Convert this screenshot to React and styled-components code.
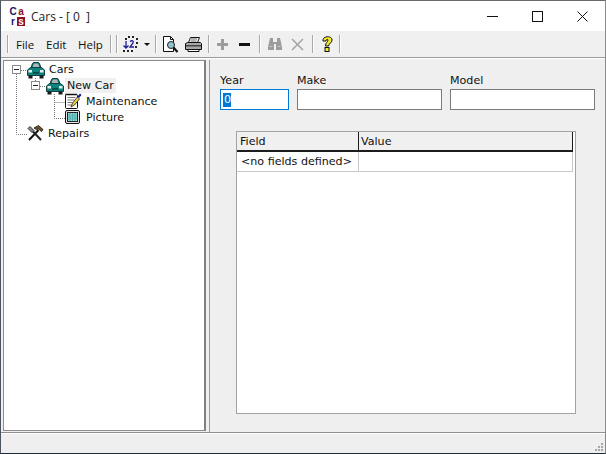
import React from 'react'
import styled, { createGlobalStyle } from 'styled-components'

const GlobalStyle = createGlobalStyle`
  html, body { margin: 0; padding: 0; background: #f0f0f0; }
  #root { width: 606px; height: 454px; overflow: hidden; }
`

const Win = styled.div`
  width: 606px;
  height: 454px;
  box-sizing: border-box;
  display: flex;
  flex-direction: column;
  background: #efefef;
  border-top: 1px solid #6a6a6a;
  border-left: 1px solid #4a5560;
  border-right: 1px solid #8a8a8a;
  border-bottom: 1px solid #1e2c3a;
  font-family: 'DejaVu Sans', sans-serif;
  font-size: 11px;
  color: #111;
`
const TitleBar = styled.div`
  height: 30px;
  flex: none;
  background: #fff;
  display: flex;
  align-items: center;
  padding-left: 8px;
`
const LogoGrid = styled.div`
  display: grid;
  grid-template-columns: 8px 8px;
  grid-template-rows: 9px 9px;
  gap: 1px 0;
  flex: none;
`
const LogoLetter = styled.span`
  display: flex;
  align-items: center;
  justify-content: center;
  overflow: hidden;
  font-family: 'Liberation Sans', sans-serif;
  font-weight: 700;
  font-size: 10px;
  line-height: 9px;
  color: ${p => p.$color};
  background: ${p => p.$bg || 'transparent'};
`
const TitleText = styled.span`
  font-family: 'Open Sans', sans-serif;
  font-size: 12px;
  color: #222;
  margin-left: 6px;
  white-space: pre;
  flex: 1;
`
const CaptionBtn = styled.div`
  width: 45px;
  height: 30px;
  display: flex;
  align-items: center;
  justify-content: center;
`
const Toolbar = styled.div`
  height: 26px;
  flex: none;
  display: flex;
  align-items: center;
  background: #f0f0f0;
  border-bottom: 1px solid #9a9a9a;
  box-shadow: 0 1px 0 #fff;
`
const Grip = styled.div`
  width: 2px;
  height: 18px;
  flex: none;
  margin-left: ${p => p.$left}px;
  border-left: 1px solid #a8a8a8;
  border-right: 1px solid #fff;
  box-sizing: border-box;
`
const MenuItem = styled.span`
  font-family: 'Open Sans', sans-serif;
  font-size: 11.5px;
  width: ${p => p.$w}px;
  flex: none;
  color: #111;
`
const MenuGroup = styled.div`
  display: flex;
  margin-left: 7px;
`
const Tool = styled.div`
  width: 17px;
  height: 17px;
  flex: none;
  margin-left: ${p => p.$left}px;
  display: flex;
  align-items: center;
  justify-content: center;
`
const Main = styled.div`
  flex: 1;
  min-height: 0;
  display: flex;
  padding: 2px 1px 0 2px;
  border-bottom: 1px solid #8f8f8f;
`
const TreePane = styled.div`
  position: relative;
  width: 203px;
  flex: none;
  box-sizing: border-box;
  margin-bottom: 1px;
  background: #fff;
  border: 1px solid #8c8c8c;
  border-right: 2px solid #808080;
`
const TreeLines = styled.svg`
  position: absolute;
  left: 0;
  top: 0;
`
const TreeRow = styled.div`
  position: relative;
  height: 16px;
  display: flex;
  align-items: center;
  padding-left: ${p => p.$indent}px;
`
const Expander = styled.div`
  width: 7px;
  height: 7px;
  border: 1px solid #8a8a8a;
  background: #fff;
  margin-right: 6px;
  display: flex;
  align-items: center;
  justify-content: center;
  flex: none;
  &::before {
    content: '';
    width: 5px;
    height: 1px;
    background: #222;
  }
`
const TreeLabel = styled.span`
  margin-left: ${p => p.$gap}px;
  padding: 1px 2px;
  background: ${p => (p.$selected ? '#f0f0f0' : 'transparent')};
  font-size: 11.1px;
  white-space: nowrap;
`
const Splitter = styled.div`
  width: 3px;
  flex: none;
  border-right: 1px solid #9a9a9a;
`
const Detail = styled.div`
  flex: 1;
  min-width: 0;
  display: flex;
  flex-direction: column;
  padding: 13px 8px 18px 10px;
`
const Fields = styled.div`
  display: flex;
  gap: 8px;
`
const Field = styled.label`
  display: flex;
  flex-direction: column;
  width: ${p => p.$w}px;
  font-size: 11.1px;
  gap: 1px;
  line-height: 15px;
`
const InputBox = styled.div`
  height: 21px;
  box-sizing: border-box;
  background: #fff;
  border: 1px solid ${p => (p.$focus ? '#0078d7' : '#7a7a7a')};
  padding: 2px;
  display: flex;
  align-items: center;
`
const Selected = styled.span`
  background: #0078d7;
  color: #fff;
  padding: 0 0 0 1px;
  line-height: 14px;
  width: 7px;
  font-size: 11.1px;
`
const Grid = styled.div`
  flex: 1;
  margin: 21px 20px 0 16px;
  background: #fff;
  border: 1px solid #a3a3a3;
  padding-right: 2px;
`
const GridRow = styled.div`
  display: grid;
  grid-template-columns: 121px 1fr;
  height: ${p => (p.$head ? 18 : 19)}px;
  box-sizing: content-box;
  background: ${p => (p.$head ? '#f0f0f0' : '#fff')};
  border-bottom: ${p => (p.$head ? '2px solid #1c1c1c' : '1px solid #c8c8c8')};
  border-right: 1px solid ${p => (p.$head ? '#1c1c1c' : '#c8c8c8')};
`
const GridCell = styled.div`
  font-size: 11.1px;
  display: flex;
  align-items: center;
  padding-left: ${p => p.$pad}px;
  white-space: nowrap;
  border-left: ${p => (p.$first ? 'none' : `1px solid ${p.$head ? '#1c1c1c' : '#c8c8c8'}`)};
`
const StatusBar = styled.div`
  height: 20px;
  flex: none;
  display: flex;
  justify-content: flex-end;
  align-items: flex-end;
  box-shadow: inset 0 1px 0 #fff;
`
const Arrow = styled.div`
  width: 0;
  height: 0;
  flex: none;
  margin-left: ${p => p.$left}px;
  border-left: 3px solid transparent;
  border-right: 3px solid transparent;
  border-top: 3px solid #111;
`

const Logo = () => (
  <LogoGrid>
    <LogoLetter $color="#17176e">C</LogoLetter>
    <LogoLetter $color="#8e1020">a</LogoLetter>
    <LogoLetter $color="#17176e">r</LogoLetter>
    <LogoLetter $color="#fff" $bg="#8e1020">s</LogoLetter>
  </LogoGrid>
)

const CarIcon = () => (
  <svg width="18" height="17" viewBox="0 0 18 17" style={{ flex: 'none', marginTop: 2 }}>
    <path d="M4 6l1.500-4.500Q6 0.500 7 0.500h4q1 0 1.500 1L14 6z" fill="#0e7a76" stroke="#12393a" />
    <path d="M5.500 6l1-3.500q0.300-1 1-1h3q0.700 0 1 1l1 3.500z" fill="#aeb8b8" />
    <path d="M0.500 8l3-2.500h11l3 2.500v5.500H0.500z" fill="#0f827d" stroke="#0a4544" />
    <rect x="1.500" y="8" width="3.500" height="2.500" fill="#e6efe6" />
    <rect x="13" y="8" width="3.500" height="2.500" fill="#e6efe6" />
    <rect x="6" y="10" width="6" height="2" fill="#06504e" />
    <rect x="1.500" y="13.500" width="4" height="3" fill="#1a1a1a" />
    <rect x="12.500" y="13.500" width="4" height="3" fill="#1a1a1a" />
  </svg>
)

const NoteIcon = () => (
  <svg width="17" height="16" viewBox="0 0 17 16" style={{ flex: 'none' }}>
    <rect x="0.500" y="1.500" width="12" height="14" rx="1" fill="#fff" stroke="#111" />
    <path d="M1 0.500v2M3 0.500v2M5 0.500v2M7 0.500v2M9 0.500v2M11 0.500v2" stroke="#111" />
    <path d="M2.500 4.500h8M2.500 7h7M2.500 9.500h5M2.500 12h4" stroke="#777" />
    <path d="M6 14l1.500-4 5-6 2 2-5 6z" fill="#e8d040" stroke="#222" strokeWidth="0.800" />
    <path d="M12.500 3.500l2.500-3 1.500 1.500-2.500 3z" fill="#1b1a8a" />
  </svg>
)

const PictureIcon = () => (
  <svg width="17" height="15" viewBox="0 0 17 15" style={{ flex: 'none' }}>
    <rect x="0.500" y="0.500" width="14" height="13" rx="1.500" fill="#e4e4e4" stroke="#111" />
    <rect x="2.500" y="2.500" width="10" height="9" fill="#8fdada" stroke="#222" />
    <path d="M3 5h9M3 7h9M3 9h9M5 3v8M7.500 3v8M10 3v8" stroke="#3a9a9a" strokeWidth="0.600" />
  </svg>
)

const ToolsIcon = () => (
  <svg width="17" height="16" viewBox="0 0 17 16" style={{ flex: 'none' }}>
    <path d="M2 15l9.500-10" stroke="#111" strokeWidth="2" />
    <path d="M14 15L6 6.500" stroke="#222" strokeWidth="2" />
    <path d="M7 3l4.500-2.500 4.500 4-1.500 2-3-2.500-2 0.500z" fill="#6e4e22" stroke="#111" strokeWidth="0.800" />
    <path d="M1 3.500l2-2 4 4-2 2z" fill="#8a8a8a" stroke="#111" strokeWidth="0.800" />
  </svg>
)

const FormIcon = () => (
  <svg width="17" height="18" viewBox="0 0 17 18">
    <g fill="#222">
      <rect x="6" y="1" width="2" height="2" />
      <rect x="10" y="1" width="2" height="2" />
      <rect x="14" y="3" width="2" height="2" />
      <rect x="14" y="7" width="2" height="2" />
      <rect x="13" y="11" width="2" height="2" />
      <rect x="1" y="15" width="2" height="2" />
      <rect x="5" y="15" width="2" height="2" />
      <rect x="9" y="15" width="2" height="2" />
      <rect x="3" y="3" width="2" height="2" />
    </g>
    <path d="M4 6v7M1.500 10.500L4 13l2.500-2.500" fill="none" stroke="#1c1c9c" strokeWidth="1.300" />
    <path d="M8 6.500c2-1.500 4-0.500 3 1.500l-3 4h4" fill="none" stroke="#1c1c9c" strokeWidth="1.300" />
  </svg>
)

const PreviewIcon = () => (
  <svg width="17" height="17" viewBox="0 0 17 17">
    <path d="M1.500 0.500h7l3 3v12h-10z" fill="#fff" stroke="#111" />
    <path d="M8.500 0.500v3h3" fill="none" stroke="#111" />
    <circle cx="9" cy="9" r="3.500" fill="#8fc4cf" stroke="#222" />
    <path d="M11.500 11.500l4 4.500" stroke="#111" strokeWidth="2.200" />
  </svg>
)

const PrintIcon = () => (
  <svg width="17" height="17" viewBox="0 0 17 17">
    <path d="M5.500 1.500h9l-2 5h-9z" fill="#fff" stroke="#111" />
    <path d="M6 3h6M5.500 5h6" stroke="#666" />
    <path d="M0.500 7.500l2-1h13l1 1v6h-16z" fill="#a8a8a8" stroke="#111" />
    <rect x="1" y="9" width="15" height="1.500" fill="#444" />
    <path d="M3 13.500h11v2H3z" fill="#fff" stroke="#111" />
  </svg>
)

const PlusIcon = () => (
  <svg width="13" height="13" viewBox="0 0 13 13">
    <path d="M5 1h3v4h4v3H8v4H5V8H1V5h4z" fill="#9c9c9c" />
  </svg>
)

const MinusIcon = () => (
  <svg width="13" height="13" viewBox="0 0 13 13">
    <rect x="1" y="5" width="11" height="3" fill="#111" />
  </svg>
)

const BinocularsIcon = () => (
  <svg width="16" height="14" viewBox="0 0 16 14">
    <path d="M3 1h3v4h4V1h3l2 9v3H9V7H7v6H1v-3z" fill="#9c9c9c" />
    <path d="M2.500 9.500h3M10.500 9.500h3" stroke="#c8c8c8" />
  </svg>
)

const CrossIcon = () => (
  <svg width="15" height="15" viewBox="0 0 15 15">
    <path d="M2 2l11 11M13 2L2 13" stroke="#a4a4a4" strokeWidth="1.500" />
  </svg>
)

const HelpIcon = () => (
  <svg width="14" height="18" viewBox="0 0 14 18">
    <path d="M3 6C2 1 12 0 12 5c0 3-3 3-3.500 6h-3C5.500 7.500 8 7 8 5 8 4 6 4 6 6z" fill="#f4ec30" stroke="#111" />
    <rect x="5" y="12.500" width="4" height="4" fill="#f4ec30" stroke="#111" />
  </svg>
)

const Resize = () => (
  <svg width="12" height="12" viewBox="0 0 12 12">
    <g fill="#a8a8a8">
      <rect x="8" y="2" width="2" height="2" />
      <rect x="5" y="5" width="2" height="2" />
      <rect x="8" y="5" width="2" height="2" />
      <rect x="2" y="8" width="2" height="2" />
      <rect x="5" y="8" width="2" height="2" />
      <rect x="8" y="8" width="2" height="2" />
    </g>
  </svg>
)

export default function App() {
  return (
    <>
      <GlobalStyle />
      <Win>
        <TitleBar>
          <Logo />
          <TitleText>Cars - [ 0  ]</TitleText>
          <CaptionBtn>
            <svg width="11" height="11" viewBox="0 0 11 11"><path d="M0 5.500h11" stroke="#111" /></svg>
          </CaptionBtn>
          <CaptionBtn>
            <svg width="11" height="11" viewBox="0 0 11 11"><rect x="0.500" y="0.500" width="10" height="10" fill="none" stroke="#111" /></svg>
          </CaptionBtn>
          <CaptionBtn>
            <svg width="11" height="11" viewBox="0 0 11 11"><path d="M0.500 0.500l10 10M10.500 0.500l-10 10" stroke="#111" /></svg>
          </CaptionBtn>
        </TitleBar>
        <Toolbar>
          <Grip $left={6} />
          <MenuGroup>
            <MenuItem $w={30}>File</MenuItem>
            <MenuItem $w={32}>Edit</MenuItem>
            <MenuItem $w={25}>Help</MenuItem>
          </MenuGroup>
          <Grip $left={7} />
          <Grip $left={4} />
          <Tool $left={4}><FormIcon /></Tool>
          <Arrow $left={5} />
          <Grip $left={5} />
          <Tool $left={5}><PreviewIcon /></Tool>
          <Tool $left={6}><PrintIcon /></Tool>
          <Grip $left={6} />
          <Tool $left={4}><PlusIcon /></Tool>
          <Tool $left={5}><MinusIcon /></Tool>
          <Grip $left={6} />
          <Tool $left={5}><BinocularsIcon /></Tool>
          <Tool $left={6}><CrossIcon /></Tool>
          <Grip $left={6} />
          <Tool $left={4}><HelpIcon /></Tool>
          <Grip $left={4} />
        </Toolbar>
        <Main>
          <TreePane>
            <TreeLines width="100" height="90" viewBox="0 0 100 90">
              <g stroke="#777" strokeDasharray="1 1" fill="none">
                <path d="M12.500 13v60.500H24" />
                <path d="M17 9.500h6" />
                <path d="M31.500 17v4M36 25.500h6" />
                <path d="M50.500 33v24.500H61M50.500 41.500H61" />
              </g>
            </TreeLines>
            <TreeRow $indent={8}>
              <Expander />
              <CarIcon />
              <TreeLabel $gap={2}>Cars</TreeLabel>
            </TreeRow>
            <TreeRow $indent={27}>
              <Expander />
              <CarIcon />
              <TreeLabel $selected $gap={1}>New Car</TreeLabel>
            </TreeRow>
            <TreeRow $indent={61}>
              <NoteIcon />
              <TreeLabel $gap={2}>Maintenance</TreeLabel>
            </TreeRow>
            <TreeRow $indent={61}>
              <PictureIcon />
              <TreeLabel $gap={2}>Picture</TreeLabel>
            </TreeRow>
            <TreeRow $indent={23}>
              <ToolsIcon />
              <TreeLabel $gap={2}>Repairs</TreeLabel>
            </TreeRow>
          </TreePane>
          <Splitter />
          <Detail>
            <Fields>
              <Field $w={69}>
                Year
                <InputBox $focus><Selected>0</Selected></InputBox>
              </Field>
              <Field $w={145}>
                Make
                <InputBox />
              </Field>
              <Field $w={145}>
                Model
                <InputBox />
              </Field>
            </Fields>
            <Grid>
              <GridRow $head>
                <GridCell $first $pad={3}>Field</GridCell>
                <GridCell $head $pad={2}>Value</GridCell>
              </GridRow>
              <GridRow>
                <GridCell $first $pad={4}>&lt;no fields defined&gt;</GridCell>
                <GridCell />
              </GridRow>
            </Grid>
          </Detail>
        </Main>
        <StatusBar>
          <Resize />
        </StatusBar>
      </Win>
    </>
  )
}
